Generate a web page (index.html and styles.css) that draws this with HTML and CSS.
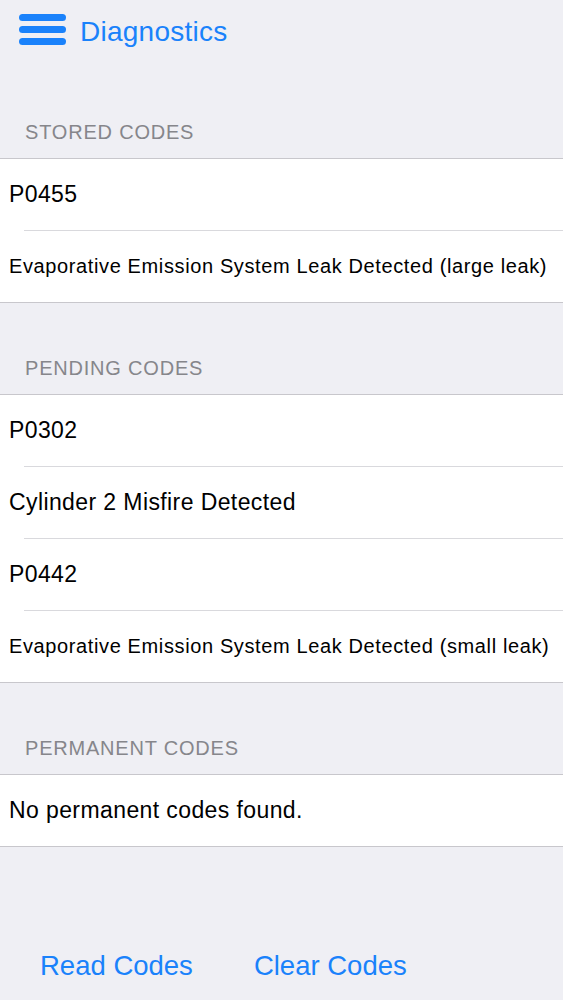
FILE: index.html
```html
<!DOCTYPE html>
<html>
<head>
<meta charset="utf-8">
<link rel="stylesheet" href="styles.css">
</head>
<body>
<div class="screen">
  <header class="nav">
    <svg class="menu" width="47" height="31" viewBox="0 0 47 31">
      <rect x="0" y="0" width="47" height="7" rx="3.5" fill="#1a82fb"/>
      <rect x="0" y="12" width="47" height="7" rx="3.5" fill="#1a82fb"/>
      <rect x="0" y="24" width="47" height="7" rx="3.5" fill="#1a82fb"/>
    </svg>
    <span class="title">Diagnostics</span>
  </header>

  <section class="group">
    <div class="group-head">STORED CODES</div>
    <ul class="list">
      <li class="row">P0455</li>
      <li class="row small">Evaporative Emission System Leak Detected (large leak)</li>
    </ul>
  </section>

  <section class="group">
    <div class="group-head">PENDING CODES</div>
    <ul class="list">
      <li class="row">P0302</li>
      <li class="row">Cylinder 2 Misfire Detected</li>
      <li class="row">P0442</li>
      <li class="row small">Evaporative Emission System Leak Detected (small leak)</li>
    </ul>
  </section>

  <section class="group">
    <div class="group-head">PERMANENT CODES</div>
    <ul class="list">
      <li class="row">No permanent codes found.</li>
    </ul>
  </section>

  <footer class="actions">
    <span class="btn">Read Codes</span>
    <span class="btn">Clear Codes</span>
  </footer>
</div>
</body>
</html>
```

FILE: styles.css
```css
* { box-sizing: border-box; }
html, body {
  margin: 0;
  padding: 0;
  background: #efeff4;
}
body {
  font-family: "Liberation Sans", Arial, sans-serif;
  color: #000;
}
.screen {
  width: 563px;
  height: 1000px;
  display: flex;
  flex-direction: column;
}
.nav {
  height: 67px;
  display: flex;
  align-items: flex-start;
  padding: 14px 0 0 19px;
  gap: 14px;
}
.menu { display: block; }
.title {
  font-size: 28px;
  line-height: 32px;
  letter-spacing: 0.25px;
  color: #1a82fb;
  margin-top: 2px;
}
.group { display: flex; flex-direction: column; }
.group-head {
  height: 91px;
  display: flex;
  align-items: flex-end;
  padding: 0 0 14px 25px;
  font-size: 20px;
  line-height: 23px;
  letter-spacing: 0.8px;
  color: #86868b;
}
.list {
  list-style: none;
  margin: 0;
  padding: 0;
  background: #fff;
  border-top: 1px solid #c8c7cc;
}
.row {
  height: 72px;
  display: flex;
  align-items: center;
  padding: 0 0 1px 9px;
  font-size: 23px;
  letter-spacing: 0.4px;
  position: relative;
}
.row:not(:last-child)::after {
  content: "";
  position: absolute;
  bottom: 0;
  left: 24px;
  right: 0;
  border-top: 1px solid #d9d9dd;
}
.row:last-child {
  padding-bottom: 0;
  border-bottom: 1px solid #c8c7cc;
}
.row.small {
  font-size: 20px;
  letter-spacing: 0.62px;
}
.actions {
  margin-top: auto;
  height: 66px;
  display: flex;
  align-items: center;
  padding: 0 0 2px 40px;
  gap: 61px;
}
.btn {
  font-size: 27.5px;
  line-height: 32px;
  letter-spacing: 0;
  color: #1a82fb;
}
```
